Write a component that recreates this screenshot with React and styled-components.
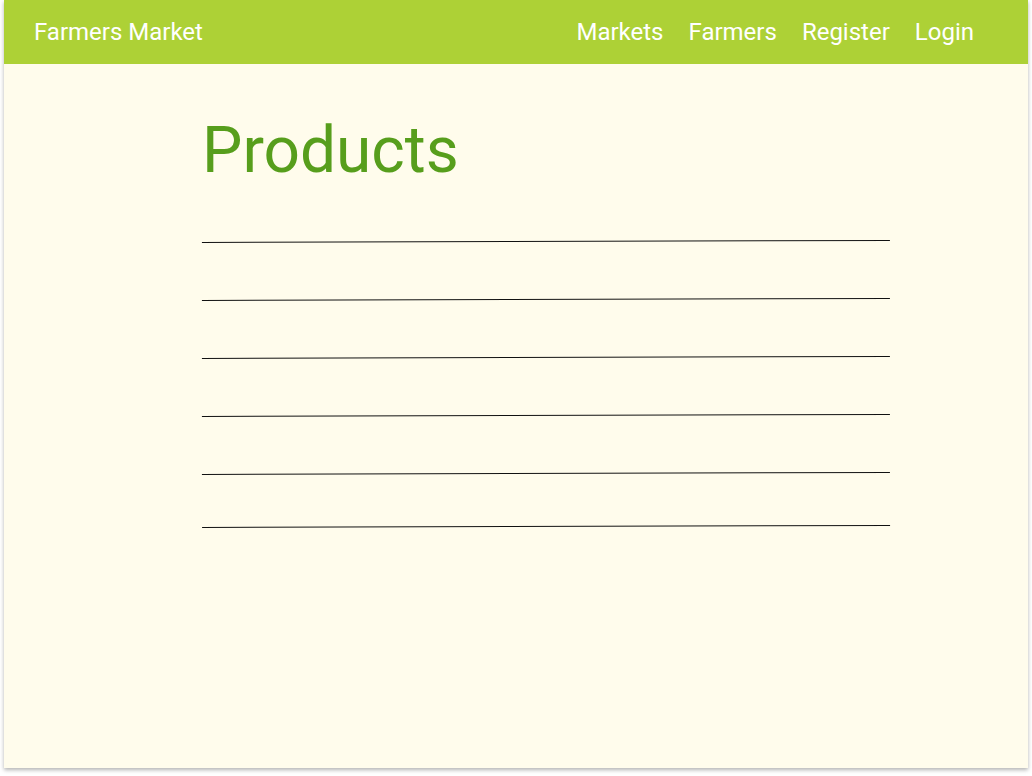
import React from "react";
import styled, { createGlobalStyle } from "styled-components";

const Global = createGlobalStyle`
  html, body { margin: 0; padding: 0; background: #ffffff; }
  body { font-family: Roboto, "Noto Sans", "Liberation Sans", sans-serif; }
`;

const Frame = styled.div`
  padding: 0 4px 8px 4px;
`;

const Page = styled.div`
  height: 768px;
  background: #fffcec;
  box-shadow: 0 2px 4px rgba(0, 0, 0, 0.3);
  display: flex;
  flex-direction: column;
`;

const NavBar = styled.header`
  height: 64px;
  background: #add136;
  display: flex;
  align-items: center;
  justify-content: space-between;
  padding: 0 54px 0 30px;
  color: #ffffff;
`;

const Brand = styled.div`
  font-size: 24px;
  font-weight: 400;
`;

const NavLinks = styled.nav`
  display: flex;
  gap: 25px;
`;

const NavLink = styled.a`
  font-size: 24px;
  color: #ffffff;
  text-decoration: none;
`;

const Main = styled.main`
  margin-left: 198px;
  width: 688px;
  padding-top: 55px;
`;

const Title = styled.h1`
  margin: 0 0 58px 0;
  font-size: 64px;
  line-height: 64px;
  font-weight: 400;
  color: #579e1c;
`;

const List = styled.ul`
  list-style: none;
  margin: 0;
  padding: 0;
`;

const Row = styled.li`
  height: ${(p) => p.$h}px;
  box-sizing: border-box;
  border-top: 1px solid #111;
  border-bottom: ${(p) => (p.$last ? "1px solid #111" : "none")};
  transform: rotate(-0.17deg);
`;

export default function App() {
  const rows = [58, 58, 58, 58, 54];
  return (
    <>
      <Global />
      <Frame>
        <Page>
          <NavBar>
            <Brand>Farmers Market</Brand>
            <NavLinks>
              <NavLink href="#">Markets</NavLink>
              <NavLink href="#">Farmers</NavLink>
              <NavLink href="#">Register</NavLink>
              <NavLink href="#">Login</NavLink>
            </NavLinks>
          </NavBar>
          <Main>
            <Title>Products</Title>
            <List>
              {rows.map((h, i) => (
                <Row key={i} $h={h} $last={i === rows.length - 1} />
              ))}
            </List>
          </Main>
        </Page>
      </Frame>
    </>
  );
}
